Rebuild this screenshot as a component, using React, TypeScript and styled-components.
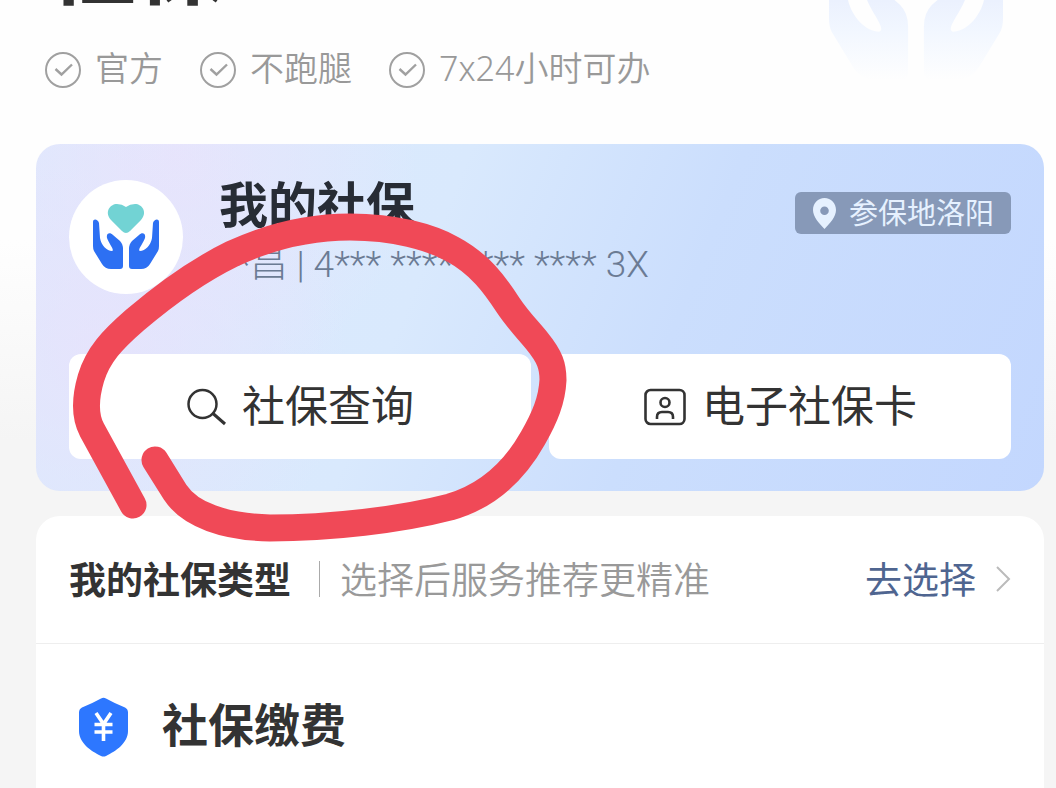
import React from 'react';
import styled, { createGlobalStyle } from 'styled-components';

const GlobalStyle = createGlobalStyle`
  * { box-sizing: border-box; }
  html, body { margin: 0; padding: 0; }
  body {
    background: #f5f5f5;
    color: #333;
    font-family: "Noto Sans CJK SC", "Noto Sans", sans-serif;
    overflow: hidden;
  }
  button, h1, h2, h3, p, ul { margin: 0; padding: 0; font: inherit; }
`;

const Page = styled.div`
  position: relative;
  min-height: 100vh;
  padding: 0 12px 0 36px;
  background: linear-gradient(180deg, #fefefe 0, #fefefe 240px, #f5f5f5 440px);
`;

const Header = styled.header`
  display: flex;
  align-items: flex-end;
  height: 10px;
  padding-left: 12px;
  overflow: hidden;
`;

const PageTitle = styled.h1`
  font-size: 88px;
  line-height: 102px;
  font-weight: 700;
`;

const Watermark = styled.svg`
  position: absolute;
  top: -54px;
  right: 53px;
  width: 174px;
  height: 134px;
`;

const TagList = styled.ul`
  display: flex;
  gap: 37px;
  padding: 35px 9px 49px;
  list-style: none;
`;

const Tag = styled.li`
  display: flex;
  align-items: center;
  gap: 14px;
  color: #999;
  font-family: "Noto Sans", "Noto Sans CJK SC", sans-serif;
  font-size: 34px;
  line-height: 46px;
  font-weight: 350;
  svg { width: 36px; height: 36px; }
`;

/* CJK glyphs sit low in their line box, so labels beside icons carry space below. */
const Label = styled.span<{ $lift: number }>`
  padding-bottom: ${({ $lift }) => $lift}px;
`;

const Card = styled.section`
  padding: 32px 33px;
  border-radius: 24px;
  background:
    radial-gradient(circle at 6% 60%, rgba(232, 226, 252, 0.8) 0, rgba(232, 226, 252, 0) 26%),
    radial-gradient(circle at 14% 4%, rgba(232, 228, 252, 0.9) 0, rgba(232, 228, 252, 0) 26%),
    linear-gradient(112deg, #dcebfd 0%, #d9e9fd 38%, #cbdefd 62%, #c3d7fe 100%);
`;

const Profile = styled.div`
  display: flex;
  align-items: flex-start;
  min-height: 178px;
`;

const Avatar = styled.div`
  display: flex;
  flex: none;
  justify-content: center;
  width: 114px;
  height: 114px;
  margin: 4px 36px 0 0;
  padding-top: 23px;
  border-radius: 50%;
  background: #fff;
  svg { width: 66px; height: 67px; }
`;

const Identity = styled.div`
  flex: 1;
`;

const CardTitle = styled.h2`
  color: #272c35;
  font-size: 49px;
  line-height: 52px;
  font-weight: 700;
`;

const IdNumber = styled.p`
  padding-top: 11px;
  color: #6b7b94;
  font-family: Roboto, "Noto Sans CJK SC", sans-serif;
  font-size: 37px;
  line-height: 52px;
  font-weight: 300;
  white-space: nowrap;
`;

const PlaceButton = styled.button`
  display: flex;
  align-items: center;
  gap: 12px;
  height: 42px;
  margin-top: 16px;
  padding: 0 17px;
  border: 0;
  border-radius: 6px;
  background: #8799b8;
  color: #e6f1ff;
  font-size: 29px;
  line-height: 38px;
  svg { width: 25px; height: 31px; }
`;

const Actions = styled.div`
  display: grid;
  grid-template-columns: 1fr 1fr;
  gap: 18px;
`;

const ActionButton = styled.button`
  display: flex;
  align-items: center;
  justify-content: center;
  gap: 16px;
  height: 105px;
  border: 0;
  border-radius: 12px;
  background: #fff;
  color: #333;
  font-size: 43px;
  line-height: 60px;
`;

const Panel = styled.section`
  margin-top: 25px;
  border-radius: 24px 24px 0 0;
  background: #fff;
`;

const TypeRow = styled.div`
  display: flex;
  align-items: center;
  padding: 35px 33px 37px;
  border-bottom: 1px solid #eee;
  font-size: 37px;
  line-height: 55px;
`;

const TypeTitle = styled.h3`
  font-weight: 700;
`;

const TypeHint = styled.p`
  flex: 1;
  display: flex;
  align-items: center;
  gap: 20px;
  padding-left: 28px;
  color: #999;
  font-weight: 350;
  &::before {
    content: "";
    width: 1px;
    height: 36px;
    background: #aaa;
  }
`;

const ChooseLink = styled.a`
  display: flex;
  align-items: center;
  gap: 19px;
  color: #4f6590;
  text-decoration: none;
  svg { width: 16px; height: 26px; }
`;

const PayRow = styled.div`
  display: flex;
  align-items: center;
  gap: 33px;
  padding: 48px 42px;
  svg { width: 51px; height: 60px; }
`;

const PayTitle = styled.h2`
  padding-bottom: 10px;
  font-size: 46px;
  line-height: 60px;
  font-weight: 700;
`;

const Marker = styled.svg`
  position: absolute;
  top: 200px;
  left: 60px;
  width: 520px;
  height: 350px;
  pointer-events: none;
`;

const handPath =
  'M0 3C0 -1 5 0 6 4L7 19C8 26 14 32 19 32C22 31 16 25 14 19C13 14 17 13 20 16L27 22Q30 25 30 30V47Q30 50 27 50H18Q12 50 9 45L1 32Q0 30 0 27Z';

const Hands = ({ fill }: { fill: string }) => (
  <g fill={fill}>
    <path d={handPath} />
    <path d={handPath} transform="translate(66 0) scale(-1 1)" />
  </g>
);

const CheckIcon = () => (
  <svg viewBox="0 0 36 36" fill="none" stroke="#a0a0a0" strokeWidth="2" aria-hidden="true">
    <circle cx="18" cy="18" r="17" />
    <path d="M10.500 17l6 5.500L27 12.500" strokeWidth="2.400" />
  </svg>
);

const SearchIcon = () => (
  <svg width="40" height="38" viewBox="0 0 40 38" fill="none" stroke="#333" strokeWidth="2.500" aria-hidden="true">
    <circle cx="16.500" cy="16" r="14" />
    <path d="M27 25.500l12 10.500" strokeWidth="3" />
  </svg>
);

const IdCardIcon = () => (
  <svg width="43" height="38" viewBox="0 0 43 38" fill="none" stroke="#333" strokeWidth="2.600" aria-hidden="true">
    <rect x="2.500" y="2" width="39" height="34" rx="5" />
    <circle cx="22" cy="14.500" r="4.500" />
    <path d="M14 31v-2q0-5 5-5h6q5 0 5 5v2" />
  </svg>
);

const PinIcon = () => (
  <svg viewBox="0 0 25 31" aria-hidden="true">
    <path
      fill="#e6f1ff"
      fillRule="evenodd"
      d="M12.500 0C19 0 24 5 24 12c0 7-6 13-11.500 19C7 25 1 19 1 12 1 5 6 0 12.500 0zm0 8.500a4.300 4.300 0 1 0 0 8.600 4.300 4.300 0 0 0 0-8.600z"
    />
  </svg>
);

const ShieldIcon = () => (
  <svg viewBox="0 0 51 60" fill="none" aria-hidden="true">
    <path
      fill="#2d77ff"
      d="M23 1.500q2.500-1.500 5 0Q36 6 47 10.500q3 1.500 3 5V34c0 12-12 20-22 25q-2.500 1.200-5 0C13 54 1 46 1 34V15.500q0-3.500 3-5Q15 6 23 1.500z"
    />
    <path stroke="#fff" strokeWidth="3.600" d="M18 16l7.500 11L33 16M25.500 27v17M16.500 27.500h18M16.500 35h18" />
  </svg>
);

const tags = ['官方', '不跑腿', '7x24小时可办'];

export default function App() {
  return (
    <>
      <GlobalStyle />
      <Page>
        <Watermark viewBox="0 0 66 50" preserveAspectRatio="none" aria-hidden="true">
          <defs>
            <linearGradient id="fade" x1="0" y1="0.400" x2="0" y2="1">
              <stop offset="0" stopColor="#ebf1fe" />
              <stop offset="0.400" stopColor="#f2f7ff" />
              <stop offset="1" stopColor="#fefefe" />
            </linearGradient>
          </defs>
          <Hands fill="url(#fade)" />
        </Watermark>

        <Header>
          <PageTitle>社保</PageTitle>
        </Header>

        <TagList>
          {tags.map((tag) => (
            <Tag key={tag}>
              <CheckIcon />
              <Label $lift={4}>{tag}</Label>
            </Tag>
          ))}
        </TagList>

        <Card>
          <Profile>
            <Avatar>
              <svg viewBox="0 -16 66 67" aria-hidden="true">
                <path
                  fill="#72d3d4"
                  d="M33 14q-2 0-4-2L18 1C11-7 17-15 24-15q5 0 9 3 4-3 9-3c7 0 13 8 6 16L37 12q-2 2-4 2z"
                />
                <Hands fill="#2d70f3" />
              </svg>
            </Avatar>
            <Identity>
              <CardTitle>我的社保</CardTitle>
              <IdNumber>**昌 | 4*** **** **** **** 3X</IdNumber>
            </Identity>
            <PlaceButton type="button">
              <PinIcon />
              <Label $lift={4}>参保地洛阳</Label>
            </PlaceButton>
          </Profile>
          <Actions>
            <ActionButton type="button">
              <SearchIcon />
              <Label $lift={8}>社保查询</Label>
            </ActionButton>
            <ActionButton type="button">
              <IdCardIcon />
              <Label $lift={8}>电子社保卡</Label>
            </ActionButton>
          </Actions>
        </Card>

        <Panel>
          <TypeRow>
            <TypeTitle>我的社保类型</TypeTitle>
            <TypeHint>选择后服务推荐更精准</TypeHint>
            <ChooseLink href="#choose">
              去选择
              <svg viewBox="0 0 16 26" fill="none" stroke="#bbb" strokeWidth="2" aria-hidden="true">
                <path d="M2 1l12 12L2 25" />
              </svg>
            </ChooseLink>
          </TypeRow>
          <PayRow>
            <ShieldIcon />
            <PayTitle>社保缴费</PayTitle>
          </PayRow>
        </Panel>

        <Marker viewBox="60 200 520 350" fill="none" aria-hidden="true">
          <path
            stroke="#f04957"
            strokeWidth="27"
            strokeLinecap="round"
            strokeLinejoin="round"
            d="M133 505L92 430C84 415 86 395 91 378C98 355 112 340 135 320C162 297 195 272 232 254C275 234 315 227 350 227C395 227 430 237 452 249C480 264 495 285 508 305C518 320 528 330 537 341C550 357 553 366 553 380C552 400 545 417 533 438C515 470 488 496 450 507C400 520 330 528 270 528C225 527 190 515 175 492L155 460"
          />
        </Marker>
      </Page>
    </>
  );
}
